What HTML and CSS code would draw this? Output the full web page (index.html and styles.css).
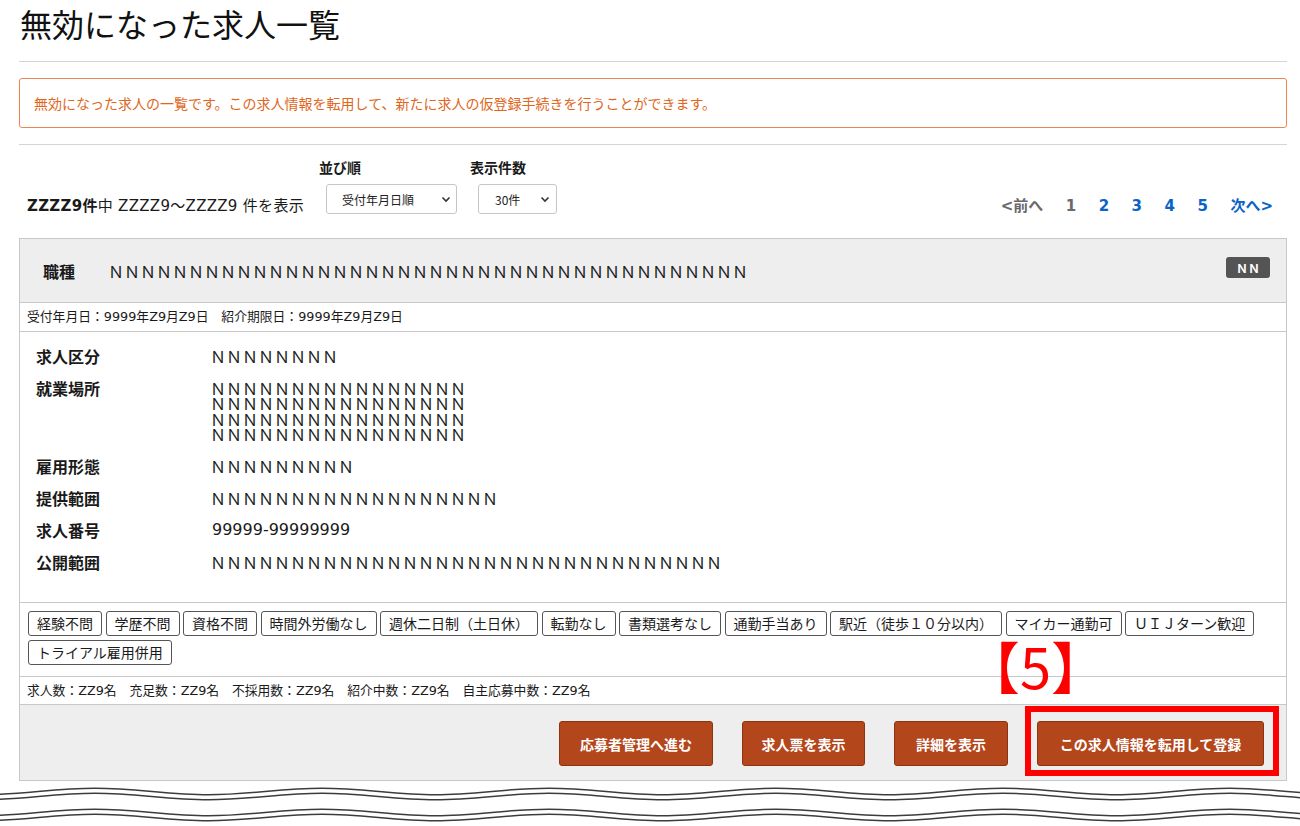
FILE: index.html
```html
<!DOCTYPE html>
<html lang="ja">
<head>
<meta charset="utf-8">
<title>無効になった求人一覧</title>
<link rel="stylesheet" href="styles.css">
</head>
<body>
<div class="page">
  <h1 class="title">無効になった求人一覧</h1>
  <hr class="rule">
  <div class="notice">無効になった求人の一覧です。この求人情報を転用して、新たに求人の仮登録手続きを行うことができます。</div>
  <hr class="rule rule-2">

  <div class="controls">
    <div class="summary"><b>ZZZZ9件</b>中 ZZZZ9〜ZZZZ9 件を表示</div>
    <div class="field field-sort">
      <div class="field-label">並び順</div>
      <div class="select select-sort"><span>受付年月日順</span><svg class="chev" width="10" height="7" viewBox="0 0 10 7"><path d="M1.5 1.5 L5 5 L8.5 1.5" fill="none" stroke="#333" stroke-width="1.6"/></svg></div>
    </div>
    <div class="field field-count">
      <div class="field-label">表示件数</div>
      <div class="select select-count"><span>30件</span><svg class="chev" width="10" height="7" viewBox="0 0 10 7"><path d="M1.5 1.5 L5 5 L8.5 1.5" fill="none" stroke="#333" stroke-width="1.6"/></svg></div>
    </div>
    <nav class="pager">
      <span class="pg pg-off">&lt;前へ</span>
      <span class="pg pg-off">1</span>
      <a class="pg">2</a>
      <a class="pg">3</a>
      <a class="pg">4</a>
      <a class="pg">5</a>
      <a class="pg">次へ&gt;</a>
    </nav>
  </div>

  <section class="card">
    <div class="card-head">
      <span class="head-label">職種</span>
      <span class="head-value">ＮＮＮＮＮＮＮＮＮＮＮＮＮＮＮＮＮＮＮＮＮＮＮＮＮＮＮＮＮＮＮＮＮＮＮＮＮＮＮＮ</span>
      <span class="badge">ＮＮ</span>
    </div>
    <div class="card-dates">受付年月日：9999年Z9月Z9日　紹介期限日：9999年Z9月Z9日</div>

    <div class="details">
      <div class="row"><div class="dt">求人区分</div><div class="dd">ＮＮＮＮＮＮＮＮ</div></div>
      <div class="row row-multi"><div class="dt">就業場所</div><div class="dd dd-multi">ＮＮＮＮＮＮＮＮＮＮＮＮＮＮＮＮ<br>ＮＮＮＮＮＮＮＮＮＮＮＮＮＮＮＮ<br>ＮＮＮＮＮＮＮＮＮＮＮＮＮＮＮＮ<br>ＮＮＮＮＮＮＮＮＮＮＮＮＮＮＮＮ</div></div>
      <div class="row"><div class="dt">雇用形態</div><div class="dd">ＮＮＮＮＮＮＮＮＮ</div></div>
      <div class="row"><div class="dt">提供範囲</div><div class="dd">ＮＮＮＮＮＮＮＮＮＮＮＮＮＮＮＮＮＮ</div></div>
      <div class="row"><div class="dt">求人番号</div><div class="dd dd-num">99999-99999999</div></div>
      <div class="row"><div class="dt">公開範囲</div><div class="dd">ＮＮＮＮＮＮＮＮＮＮＮＮＮＮＮＮＮＮＮＮＮＮＮＮＮＮＮＮＮＮＮＮ</div></div>
    </div>

    <div class="tags">
      <span class="tag">経験不問</span>
      <span class="tag">学歴不問</span>
      <span class="tag">資格不問</span>
      <span class="tag">時間外労働なし</span>
      <span class="tag">週休二日制（土日休）</span>
      <span class="tag">転勤なし</span>
      <span class="tag">書類選考なし</span>
      <span class="tag">通勤手当あり</span>
      <span class="tag">駅近（徒歩１０分以内）</span>
      <span class="tag">マイカー通勤可</span>
      <span class="tag">ＵＩＪターン歓迎</span>
      <span class="tag">トライアル雇用併用</span>
    </div>

    <div class="counts">求人数：ZZ9名　充足数：ZZ9名　不採用数：ZZ9名　紹介中数：ZZ9名　自主応募中数：ZZ9名</div>

    <div class="actions">
      <button class="btn btn-apply">応募者管理へ進む</button>
      <button class="btn btn-sheet">求人票を表示</button>
      <button class="btn btn-detail">詳細を表示</button>
      <button class="btn btn-reuse">この求人情報を転用して登録</button>
      <div class="callout-box"></div>
      <div class="callout-label">【5】</div>
    </div>
  </section>

  <svg class="tear" width="1300" height="45" viewBox="0 0 1300 45">
    <defs>
      <path id="wave" d="M-132 -3.3 C-90.7 -3.3 -59.8 3.3 -18.5 3.3 S53.7 -3.3 95 -3.3 S167.2 3.3 208.5 3.3 S280.7 -3.3 322 -3.3 S394.2 3.3 435.5 3.3 S507.7 -3.3 549 -3.3 S621.2 3.3 662.5 3.3 S734.7 -3.3 776 -3.3 S848.2 3.3 889.5 3.3 S961.7 -3.3 1003 -3.3 S1075.2 3.3 1116.5 3.3 S1188.7 -3.3 1230 -3.3 S1302.2 3.3 1343.5 3.3" fill="none"/>
    </defs>
    <use href="#wave" x="0" y="13" stroke="#3c3c3c" stroke-width="6.6"/>
    <use href="#wave" x="0" y="13" stroke="#ffffff" stroke-width="3.6"/>
    <use href="#wave" x="0" y="34" stroke="#3c3c3c" stroke-width="6.6"/>
    <use href="#wave" x="0" y="34" stroke="#ffffff" stroke-width="3.6"/>
  </svg>
</div>
</body>
</html>
```

FILE: styles.css
```css
* { box-sizing: border-box; }

html, body {
  margin: 0;
  padding: 0;
  background: #ffffff;
}

body {
  width: 1300px;
  height: 826px;
  overflow: hidden;
  font-family: "DejaVu Sans", "Noto Sans CJK JP", sans-serif;
  color: #1a1a1a;
}

.page {
  padding: 0 13px 0 19px;
}

.title {
  margin: 0;
  padding-left: 1px;
  font-family: "Noto Sans CJK JP", sans-serif;
  font-size: 32px;
  font-weight: 400;
  line-height: 46px;
  color: #111;
}

.rule {
  display: block;
  height: 0;
  margin: 15px 0 0;
  border: 0;
  border-top: 1px solid #d4d4d4;
}

.rule-2 {
  margin-top: 16px;
}

.notice {
  margin-top: 16px;
  height: 50px;
  padding: 0 14px;
  border: 1px solid #ec8650;
  border-radius: 3px;
  font-family: "Noto Sans CJK JP", sans-serif;
  font-size: 14px;
  line-height: 48px;
  color: #e0661c;
}

/* controls row */
.controls {
  display: flex;
  align-items: flex-end;
  padding: 12px 14px 22px 8px;
}

.summary {
  width: 292px;
  flex: none;
  font-size: 15px;
  line-height: 20px;
  letter-spacing: 0.3px;
  white-space: nowrap;
}

.summary b {
  font-weight: 700;
}

.field {
  display: flex;
  flex-direction: column;
  gap: 7px;
  margin-bottom: 2px;
}

.field-count {
  margin-left: 13px;
}

.field-label {
  font-family: "Noto Sans CJK JP", sans-serif;
  font-size: 14px;
  font-weight: 700;
  line-height: 20px;
}

.select {
  display: flex;
  align-items: center;
  justify-content: space-between;
  height: 30px;
  border: 1px solid #c6c6c6;
  border-radius: 3px;
  background: #fff;
  font-family: "Noto Sans CJK JP", sans-serif;
  font-size: 12px;
  color: #222;
}

.select-sort {
  width: 131px;
  margin-left: 7px;
  padding: 0 5px 0 15px;
}

.select-count {
  width: 79px;
  margin-left: 8px;
  padding: 0 6px 0 16px;
}

.chev {
  display: block;
}

.pager {
  margin-left: auto;
  display: flex;
  gap: 22.5px;
  font-size: 15px;
  font-weight: 700;
  line-height: 20px;
}

.pg {
  color: #0b63c6;
  font-family: "DejaVu Sans", "Noto Sans CJK JP", sans-serif;
}

.pg-off {
  color: #6a6a6a;
}

/* card */
.card {
  border: 1px solid #c8c8c8;
}

.card-head {
  display: flex;
  align-items: center;
  height: 64px;
  padding: 0 16px 0 23px;
  background: #eeeeee;
  border-bottom: 1px solid #c8c8c8;
  font-family: "Noto Sans CJK JP", sans-serif;
}

.head-label {
  width: 65px;
  font-size: 16px;
  font-weight: 700;
}

.head-value {
  font-size: 16px;
}

.badge {
  margin-left: auto;
  margin-top: -7px;
  width: 44px;
  height: 21px;
  border-radius: 3px;
  background: #545454;
  color: #fff;
  font-size: 12px;
  font-weight: 700;
  line-height: 21px;
  text-align: center;
}

.card-dates {
  height: 29px;
  padding-left: 7px;
  border-bottom: 1px solid #c8c8c8;
  font-size: 12.8px;
  line-height: 28px;
}

.details {
  height: 271px;
  padding: 8px 0 0 16px;
  border-bottom: 1px solid #c8c8c8;
}

.row {
  display: flex;
  height: 32px;
  line-height: 32px;
}

.row-multi {
  height: 78px;
}

.dt {
  width: 174px;
  flex: none;
  font-family: "Noto Sans CJK JP", sans-serif;
  font-size: 16px;
  font-weight: 700;
}

.dd {
  font-family: "Noto Sans CJK JP", sans-serif;
  font-size: 16px;
}

.dd-num {
  font-family: "DejaVu Sans", "Noto Sans CJK JP", sans-serif;
  font-size: 16px;
  margin-left: 2px;
}

.dd-multi {
  line-height: 15.3px;
  padding-top: 9px;
}

.tags {
  display: flex;
  flex-wrap: wrap;
  align-content: flex-start;
  gap: 4px 3.5px;
  height: 74px;
  padding: 8px 8px 0 8px;
  border-bottom: 1px solid #c8c8c8;
}

.tag {
  height: 25px;
  padding: 0 8px;
  border: 1px solid #555;
  border-radius: 3px;
  background: #fff;
  font-family: "Noto Sans CJK JP", sans-serif;
  font-size: 14px;
  line-height: 23px;
  white-space: nowrap;
}

.counts {
  height: 28px;
  padding-left: 7px;
  border-bottom: 1px solid #c8c8c8;
  font-size: 12.8px;
  line-height: 27px;
}

.actions {
  position: relative;
  display: flex;
  justify-content: flex-end;
  gap: 29px;
  height: 75px;
  padding: 16px 22px 0 0;
  background: #eeeeee;
}

.btn {
  height: 45px;
  padding: 0;
  border: 1px solid #8c3412;
  border-radius: 3px;
  background: #b4461b;
  color: #fff;
  font-family: "Noto Sans CJK JP", sans-serif;
  font-size: 14px;
  font-weight: 700;
  text-align: center;
}

.btn-apply { width: 154px; }
.btn-sheet { width: 123px; }
.btn-detail { width: 114px; }
.btn-reuse { width: 227px; }

/* annotation overlay */
.callout-box {
  position: absolute;
  left: 1005px;
  top: 1px;
  width: 254px;
  height: 70px;
  border: 6px solid #ff0000;
}

.callout-label {
  position: absolute;
  left: 944px;
  top: -68px;
  font-family: "Noto Sans CJK JP", sans-serif;
  font-size: 56px;
  font-weight: 400;
  line-height: 1;
  color: #ff0000;
}

.tear {
  display: block;
  margin: 0 -13px 0 -19px;
}
```
